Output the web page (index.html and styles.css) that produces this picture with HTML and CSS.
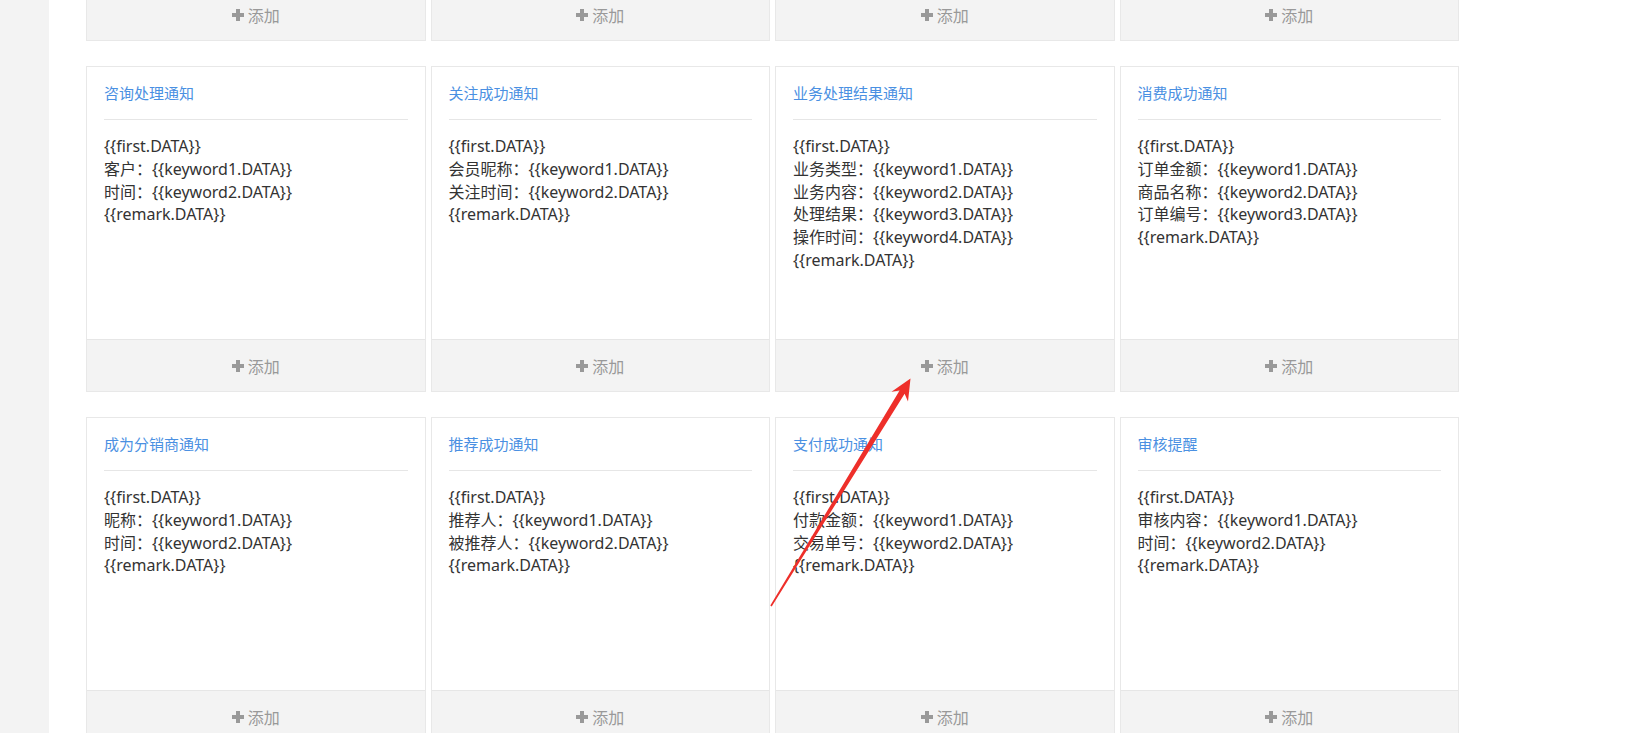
FILE: index.html
```html
<!DOCTYPE html>
<html lang="zh-CN">
<head>
<meta charset="utf-8">
<title>模板消息</title>
<link rel="stylesheet" href="styles.css">
</head>
<body>
<div class="layout">
  <aside class="sidebar"></aside>
  <main class="main">
    <div class="grid">
      <div class="card"><div class="card-body"></div><div class="add"><svg class="plus" viewBox="0 0 12 12"><path d="M4 0h4v4h4v4H8v4H4V8H0V4h4z"/></svg><span>添加</span></div></div>
      <div class="card"><div class="card-body"></div><div class="add"><svg class="plus" viewBox="0 0 12 12"><path d="M4 0h4v4h4v4H8v4H4V8H0V4h4z"/></svg><span>添加</span></div></div>
      <div class="card"><div class="card-body"></div><div class="add"><svg class="plus" viewBox="0 0 12 12"><path d="M4 0h4v4h4v4H8v4H4V8H0V4h4z"/></svg><span>添加</span></div></div>
      <div class="card"><div class="card-body"></div><div class="add"><svg class="plus" viewBox="0 0 12 12"><path d="M4 0h4v4h4v4H8v4H4V8H0V4h4z"/></svg><span>添加</span></div></div>

      <div class="card"><div class="card-body"><div class="title">咨询处理通知</div><div class="content">{{first.DATA}}<br>客户：{{keyword1.DATA}}<br>时间：{{keyword2.DATA}}<br>{{remark.DATA}}</div></div><div class="add"><svg class="plus" viewBox="0 0 12 12"><path d="M4 0h4v4h4v4H8v4H4V8H0V4h4z"/></svg><span>添加</span></div></div>
      <div class="card"><div class="card-body"><div class="title">关注成功通知</div><div class="content">{{first.DATA}}<br>会员昵称：{{keyword1.DATA}}<br>关注时间：{{keyword2.DATA}}<br>{{remark.DATA}}</div></div><div class="add"><svg class="plus" viewBox="0 0 12 12"><path d="M4 0h4v4h4v4H8v4H4V8H0V4h4z"/></svg><span>添加</span></div></div>
      <div class="card"><div class="card-body"><div class="title">业务处理结果通知</div><div class="content">{{first.DATA}}<br>业务类型：{{keyword1.DATA}}<br>业务内容：{{keyword2.DATA}}<br>处理结果：{{keyword3.DATA}}<br>操作时间：{{keyword4.DATA}}<br>{{remark.DATA}}</div></div><div class="add"><svg class="plus" viewBox="0 0 12 12"><path d="M4 0h4v4h4v4H8v4H4V8H0V4h4z"/></svg><span>添加</span></div></div>
      <div class="card"><div class="card-body"><div class="title">消费成功通知</div><div class="content">{{first.DATA}}<br>订单金额：{{keyword1.DATA}}<br>商品名称：{{keyword2.DATA}}<br>订单编号：{{keyword3.DATA}}<br>{{remark.DATA}}</div></div><div class="add"><svg class="plus" viewBox="0 0 12 12"><path d="M4 0h4v4h4v4H8v4H4V8H0V4h4z"/></svg><span>添加</span></div></div>

      <div class="card"><div class="card-body"><div class="title">成为分销商通知</div><div class="content">{{first.DATA}}<br>昵称：{{keyword1.DATA}}<br>时间：{{keyword2.DATA}}<br>{{remark.DATA}}</div></div><div class="add"><svg class="plus" viewBox="0 0 12 12"><path d="M4 0h4v4h4v4H8v4H4V8H0V4h4z"/></svg><span>添加</span></div></div>
      <div class="card"><div class="card-body"><div class="title">推荐成功通知</div><div class="content">{{first.DATA}}<br>推荐人：{{keyword1.DATA}}<br>被推荐人：{{keyword2.DATA}}<br>{{remark.DATA}}</div></div><div class="add"><svg class="plus" viewBox="0 0 12 12"><path d="M4 0h4v4h4v4H8v4H4V8H0V4h4z"/></svg><span>添加</span></div></div>
      <div class="card"><div class="card-body"><div class="title">支付成功通知</div><div class="content">{{first.DATA}}<br>付款金额：{{keyword1.DATA}}<br>交易单号：{{keyword2.DATA}}<br>{{remark.DATA}}</div></div><div class="add"><svg class="plus" viewBox="0 0 12 12"><path d="M4 0h4v4h4v4H8v4H4V8H0V4h4z"/></svg><span>添加</span></div></div>
      <div class="card"><div class="card-body"><div class="title">审核提醒</div><div class="content">{{first.DATA}}<br>审核内容：{{keyword1.DATA}}<br>时间：{{keyword2.DATA}}<br>{{remark.DATA}}</div></div><div class="add"><svg class="plus" viewBox="0 0 12 12"><path d="M4 0h4v4h4v4H8v4H4V8H0V4h4z"/></svg><span>添加</span></div></div>
    </div>
  </main>
</div>
<svg class="arrow" width="1650" height="733" viewBox="0 0 1650 733">
  <polygon points="910.5,378.5 908,401.5 904.6,393.8 771.7,606.4 770.3,605.6 899.6,390.4 891.5,391.8"/>
</svg>
</body>
</html>
```

FILE: styles.css
```css
html, body {
  margin: 0;
  padding: 0;
  background: #fff;
  height: 733px;
  overflow: hidden;
}
body {
  font-family: "Noto Sans", "Noto Sans CJK SC", sans-serif;
  color: #333;
  position: relative;
}
.layout {
  display: flex;
  height: 733px;
}
.sidebar {
  width: 49px;
  flex: none;
  background: #f3f3f3;
}
.main {
  flex: 1;
  padding-left: 37px;
}
.grid {
  width: 1373px;
  margin-top: -285px;
  display: grid;
  grid-template-columns: repeat(4, 1fr);
  column-gap: 5px;
  row-gap: 25px;
}
.card {
  height: 326px;
  box-sizing: border-box;
  border: 1px solid #e8e8e8;
  display: flex;
  flex-direction: column;
  background: #fff;
}
.card-body {
  flex: 1;
  padding: 15px 17px 0;
}
.title {
  font-size: 15px;
  line-height: 22px;
  color: #4a90e2;
  padding-bottom: 15px;
  border-bottom: 1px solid #e6e6e6;
}
.content {
  margin-top: 15px;
  font-size: 16px;
  line-height: 22.8px;
  color: #333;
}
.add {
  height: 51px;
  border-top: 1px solid #e6e6e6;
  background: #f3f3f3;
  display: flex;
  align-items: center;
  justify-content: center;
  gap: 4px;
  color: #999;
  font-size: 16px;
}
.plus {
  width: 12px;
  height: 12px;
  fill: #999;
}
.arrow {
  position: absolute;
  left: 0;
  top: 0;
  pointer-events: none;
}
.arrow polygon {
  fill: #ee2f2a;
}
```
